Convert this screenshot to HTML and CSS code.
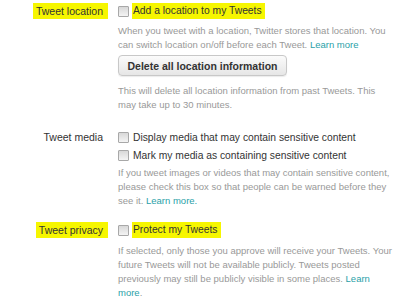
FILE: index.html
```html
<!DOCTYPE html>
<html>
<head>
<meta charset="utf-8">
<link rel="stylesheet" href="styles.css">
</head>
<body>
<div class="settings">
  <div class="row row-location">
    <div class="label"><span class="hl hl-label">Tweet location</span></div>
    <div class="content">
      <div class="check"><span class="box"></span><span class="hl hl-check">Add a location to my Tweets</span></div>
      <p class="desc desc-first">When you tweet with a location, Twitter stores that location. You<br>can switch location on/off before each Tweet. <a href="#">Learn more</a></p>
      <button class="btn">Delete all location information</button>
      <p class="desc desc-after-btn">This will delete all location information from past Tweets. This<br>may take up to 30 minutes.</p>
    </div>
  </div>
  <div class="row row-media">
    <div class="label"><span class="plain-label">Tweet media</span></div>
    <div class="content">
      <div class="check"><span class="box"></span><span class="text">Display media that may contain sensitive content</span></div>
      <div class="check check-second"><span class="box"></span><span class="text">Mark my media as containing sensitive content</span></div>
      <p class="desc desc-media">If you tweet images or videos that may contain sensitive content,<br>please check this box so that people can be warned before they<br>see it. <a href="#">Learn more.</a></p>
    </div>
  </div>
  <div class="row row-privacy">
    <div class="label"><span class="hl hl-label">Tweet privacy</span></div>
    <div class="content">
      <div class="check"><span class="box"></span><span class="hl hl-check">Protect my Tweets</span></div>
      <p class="desc desc-privacy">If selected, only those you approve will receive your Tweets. Your<br>future Tweets will not be available publicly. Tweets posted<br>previously may still be publicly visible in some places. <a href="#">Learn<br>more</a>.</p>
    </div>
  </div>
</div>
</body>
</html>
```

FILE: styles.css
```css
html, body {
  margin: 0;
  padding: 0;
  background: #ffffff;
}
body {
  font-family: "Liberation Sans", Arial, sans-serif;
  color: #333333;
  width: 400px;
  height: 301px;
  overflow: hidden;
}
.settings {
  padding-top: 3px;
}
.row {
  display: flex;
}
.row-media {
  margin-top: 17px;
}
.row-privacy {
  margin-top: 14px;
}
.label {
  width: 103px;
  text-align: right;
  font-size: 10.5px;
  line-height: 16px;
  flex: none;
}
.content {
  margin-left: 15px;
  flex: 1;
}
.hl {
  background: #f6f600;
}
.hl-label {
  padding: 0 5px 0 3px;
  display: inline-block;
  margin-right: -5px;
}
.check {
  display: flex;
  align-items: center;
  height: 16px;
  font-size: 10.3px;
}
.check-second {
  margin-top: 2px;
}
.box {
  width: 9px;
  height: 9px;
  border: 1px solid #a8a8a8;
  background: linear-gradient(#d8d8d8, #f4f4f4);
  border-radius: 1px;
  margin-right: 3px;
  flex: none;
}
.hl-check {
  padding: 0 3px 0 1px;
  line-height: 16px;
}
.text {
  padding-left: 1px;
}
.desc {
  margin: 0;
  font-size: 9.5px;
  line-height: 14px;
  color: #999999;
}
.desc a {
  color: #2a9fa8;
  text-decoration: none;
}
.desc-first {
  margin-top: 5px;
}
.btn {
  display: block;
  margin-top: 3px;
  width: 169px;
  height: 21px;
  padding: 0;
  font-family: "Liberation Sans", Arial, sans-serif;
  font-size: 10.5px;
  font-weight: bold;
  color: #333333;
  border: 1px solid #c8c8c8;
  border-radius: 4px;
  background: linear-gradient(#fbfbfb, #e6e6e6);
  box-shadow: 0 1px 1px rgba(0,0,0,0.08);
}
.desc-after-btn {
  margin-top: 8px;
}
.desc-media {
  margin-top: 3px;
}
.desc-privacy {
  margin-top: 6px;
}
```
